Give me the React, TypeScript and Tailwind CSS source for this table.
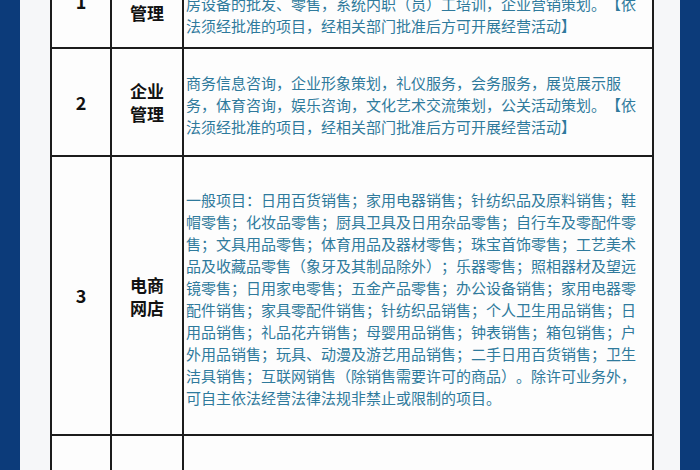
import React from 'react';

const rows = [
  {
    no: '1',
    title: ['咨询', '管理'],
    lines: [
      '技术开发、技术咨询、技术服务；计算机软硬件及辅助设备、厨',
      '房设备的批发、零售，系统内职（员）工培训，企业营销策划。【依',
      '法须经批准的项目，经相关部门批准后方可开展经营活动】',
    ],
  },
  {
    no: '2',
    title: ['企业', '管理'],
    lines: [
      '商务信息咨询，企业形象策划，礼仪服务，会务服务，展览展示服',
      '务，体育咨询，娱乐咨询，文化艺术交流策划，公关活动策划。【依',
      '法须经批准的项目，经相关部门批准后方可开展经营活动】',
    ],
  },
  {
    no: '3',
    title: ['电商', '网店'],
    lines: [
      '一般项目：日用百货销售；家用电器销售；针纺织品及原料销售；鞋',
      '帽零售；化妆品零售；厨具卫具及日用杂品零售；自行车及零配件零',
      '售；文具用品零售；体育用品及器材零售；珠宝首饰零售；工艺美术',
      '品及收藏品零售（象牙及其制品除外）；乐器零售；照相器材及望远',
      '镜零售；日用家电零售；五金产品零售；办公设备销售；家用电器零',
      '配件销售；家具零配件销售；针纺织品销售；个人卫生用品销售；日',
      '用品销售；礼品花卉销售；母婴用品销售；钟表销售；箱包销售；户',
      '外用品销售；玩具、动漫及游艺用品销售；二手日用百货销售；卫生',
      '洁具销售；互联网销售（除销售需要许可的商品）。除许可业务外，',
      '可自主依法经营法律法规非禁止或限制的项目。',
    ],
  },
];

const font = "font-['Noto_Sans_CJK_SC','Noto_Sans',sans-serif]";

const App: React.FC = () => {
  return (
    <div className={`w-[700px] h-[470px] overflow-hidden flex bg-[#f6f7f9] ${font}`}>
      {/* left frame */}
      <div className="w-[20px] shrink-0 bg-[#0c3b7a]" />

      <div className="flex-1 pl-[30px] pr-[26px]">
        <div className="-mt-[47px] grid grid-cols-[58px_70px_1fr] grid-rows-[92px_106px_277px_80px] gap-[2px] p-[2px] bg-[#1c1c1c]">
          {rows.map((row) => (
            <React.Fragment key={row.no}>
              <div className="bg-[#fdfdfd] flex items-center justify-center text-[18px] font-bold text-[#111]">
                {row.no}
              </div>
              <div className="bg-[#fdfdfd] flex flex-col items-center justify-center text-[17px] leading-[23px] font-bold text-[#111]">
                {row.title.map((t) => (
                  <span key={t}>{t}</span>
                ))}
              </div>
              <div className="bg-[#fdfdfd] flex flex-col justify-center pl-[2px] pt-[6px] text-[15px] leading-[22px] text-[#2f7a9c] [text-spacing-trim:space-all]">
                {row.lines.map((l, i) => (
                  <span key={i} className="whitespace-nowrap">
                    {l}
                  </span>
                ))}
              </div>
            </React.Fragment>
          ))}
          {/* next row, cut off */}
          <div className="bg-[#fdfdfd]" />
          <div className="bg-[#fdfdfd]" />
          <div className="bg-[#fdfdfd]" />
        </div>
      </div>

      {/* right frame */}
      <div className="w-[20px] shrink-0 bg-[#0c3b7a]" />
    </div>
  );
};

export default App;
